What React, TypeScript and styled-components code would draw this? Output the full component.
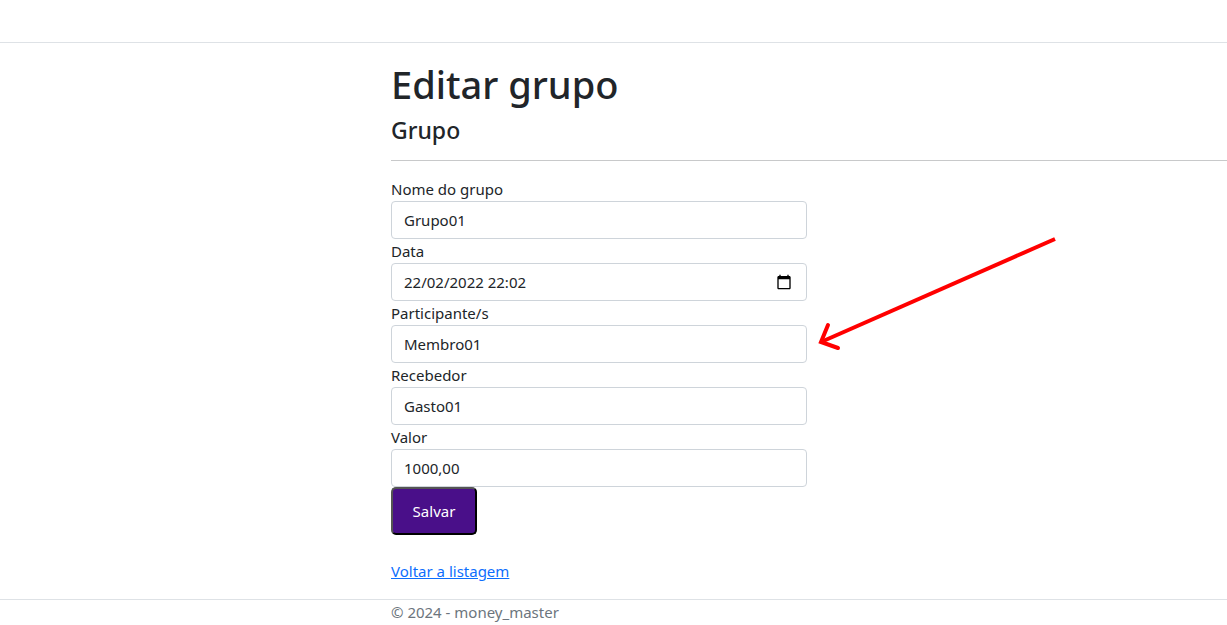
import React from "react";
import styled, { createGlobalStyle } from "styled-components";

const GlobalStyle = createGlobalStyle`
  *, *::before, *::after { box-sizing: border-box; }
  body {
    margin: 0;
    background: #fff;
    color: #212529;
    font-family: "Segoe UI", "Noto Sans", "Liberation Sans", sans-serif;
    font-size: 15px;
    line-height: 24px;
    overflow-x: hidden;
  }
`;

const Header = styled.header`
  height: 43px;
  margin-bottom: 16px;
  border-bottom: 1px solid #dee2e6;
`;

const Container = styled.div`
  padding-left: 391px;
`;

const Title = styled.h1`
  margin: 0 0 6px;
  font-size: 38px;
  line-height: 50px;
  font-weight: 500;
`;

const Subtitle = styled.h4`
  margin: 0;
  font-size: 23px;
  line-height: 31px;
  font-weight: 500;
`;

const Divider = styled.hr`
  height: 1px;
  margin: 14px 0 16px;
  border: 0;
  background: #c8c9ca;
`;

const Form = styled.form`
  max-width: 416px;
`;

const Field = styled.div`
  position: relative;
`;

const Label = styled.label`
  display: block;
`;

const Input = styled.input`
  display: block;
  width: 100%;
  height: 38px;
  padding: 6px 12px;
  border: 1px solid #ced4da;
  border-radius: 4px;
  background: #fff;
  color: #212529;
  font: inherit;
`;

const PickerButton = styled.button`
  position: absolute;
  right: 15px;
  bottom: 11px;
  display: flex;
  padding: 0;
  border: 0;
  background: transparent;
  color: #000;
`;

const Arrow = styled.svg`
  position: absolute;
  left: 100%;
  bottom: 8px;
  overflow: visible;
  pointer-events: none;
`;

const SaveButton = styled.button`
  display: block;
  width: 86px;
  height: 48px;
  padding: 0;
  border: 2px outset #000;
  border-radius: 5px;
  background: #490f89;
  color: #fff;
  font: inherit;
`;

const BackRow = styled.div`
  margin: 24px 0 16px;
`;

const BackLink = styled.a`
  color: #0d6efd;
  text-decoration: underline;
`;

const Footer = styled.footer`
  border-top: 1px solid #dee2e6;
  color: #6c757d;
`;

const CalendarIcon = () => (
  <svg width="16" height="16" viewBox="0 0 24 24" fill="currentColor" aria-hidden="true">
    <path d="M20 3h-1V1h-2v2H7V1H5v2H4c-1.1 0-2 .9-2 2v16c0 1.1.9 2 2 2h16c1.1 0 2-.9 2-2V5c0-1.1-.9-2-2-2zm0 18H4V8h16v13z" />
  </svg>
);

export default function App() {
  return (
    <>
      <GlobalStyle />
      <Header />
      <Container as="main">
        <Title>Editar grupo</Title>
        <Subtitle>Grupo</Subtitle>
        <Divider />
        <Form onSubmit={(e) => e.preventDefault()}>
          <Field>
            <Label htmlFor="nome">Nome do grupo</Label>
            <Input id="nome" defaultValue="Grupo01" />
          </Field>
          <Field>
            <Label htmlFor="data">Data</Label>
            <Input id="data" defaultValue="22/02/2022 22:02" />
            <PickerButton type="button" aria-label="Abrir calendário">
              <CalendarIcon />
            </PickerButton>
          </Field>
          <Field>
            <Label htmlFor="participantes">Participante/s</Label>
            <Input id="participantes" defaultValue="Membro01" />
            <Arrow width="252" height="120" viewBox="0 0 252 120" aria-hidden="true">
              <g fill="none" stroke="#f00" strokeWidth="4">
                <path d="M14 107 L248 4" />
                <path d="M21 90 L14 107 L31 113" strokeLinecap="round" />
              </g>
            </Arrow>
          </Field>
          <Field>
            <Label htmlFor="recebedor">Recebedor</Label>
            <Input id="recebedor" defaultValue="Gasto01" />
          </Field>
          <Field>
            <Label htmlFor="valor">Valor</Label>
            <Input id="valor" defaultValue="1000,00" />
          </Field>
          <SaveButton type="submit">Salvar</SaveButton>
        </Form>
        <BackRow>
          <BackLink href="#">Voltar a listagem</BackLink>
        </BackRow>
      </Container>
      <Footer>
        <Container>© 2024 - money_master</Container>
      </Footer>
    </>
  );
}
